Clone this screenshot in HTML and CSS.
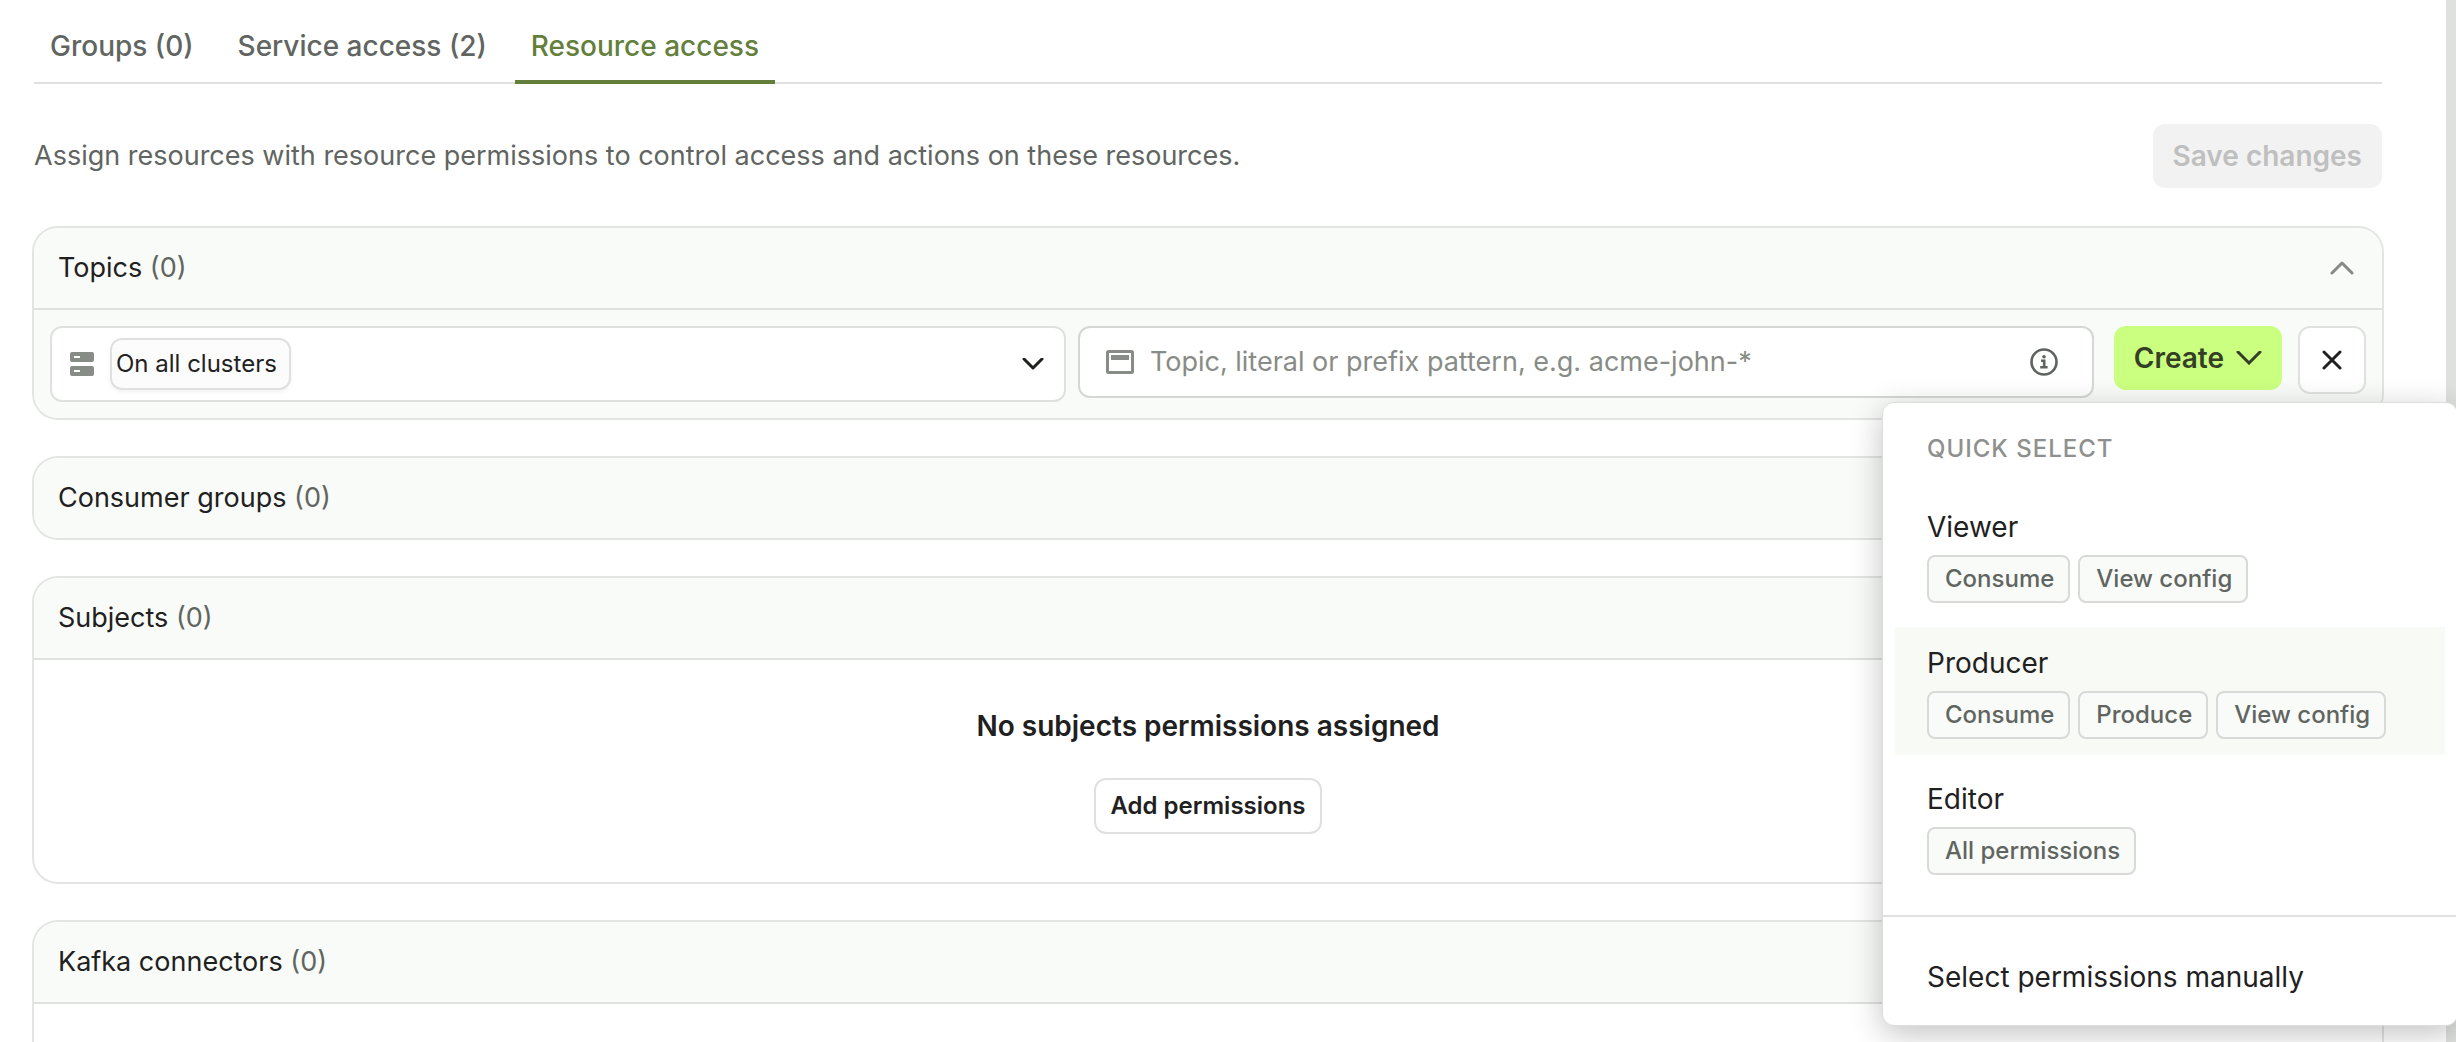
FILE: index.html
```html
<!DOCTYPE html>
<html lang="en">
<head>
<meta charset="utf-8">
<title>Resource access</title>
<link rel="stylesheet" href="styles.css">
</head>
<body>
<div class="page">
  <main class="content">
    <nav class="tabs">
      <a class="tab" href="#groups">Groups (0)</a>
      <a class="tab" href="#service-access">Service access (2)</a>
      <a class="tab tab-active" href="#resource-access" aria-current="page">Resource access</a>
    </nav>

    <div class="intro">
      <p class="intro-text">Assign resources with resource permissions to control access and actions on these resources.</p>
      <button class="save-button" type="button" disabled>Save changes</button>
    </div>

    <section class="card">
      <h2 class="card-title">
        <button class="card-header" type="button" aria-expanded="true">
          <span class="card-label">Topics <span class="count">(0)</span></span>
          <svg class="caret" width="24" height="14" viewBox="0 0 24 14" aria-hidden="true"><path d="M2 12 12 2l10 10"/></svg>
        </button>
      </h2>
      <div class="topic-form">
        <div class="field cluster-field">
          <svg width="24" height="24" viewBox="0 0 24 24" aria-hidden="true">
            <rect class="icon-fill" width="24" height="10" rx="2"/><rect class="icon-fill" y="14" width="24" height="10" rx="2"/>
            <rect class="icon-gap" x="4" y="4" width="6" height="2"/><rect class="icon-gap" x="4" y="18" width="6" height="2"/>
          </svg>
          <select class="cluster-select" aria-label="Clusters"><option>On all clusters</option></select>
          <svg class="field-chevron" width="22" height="12" viewBox="0 0 22 12" aria-hidden="true"><path d="M2 1 11 10l9-9"/></svg>
        </div>
        <div class="field pattern-field">
          <svg width="28" height="24" viewBox="0 0 28 24" aria-hidden="true">
            <rect class="icon-line" x="1.5" y="1.5" width="25" height="21" rx="1"/><rect class="icon-fill" x="5" y="5" width="18" height="5"/>
          </svg>
          <input class="pattern-input" type="text" aria-label="Topic pattern" placeholder="Topic, literal or prefix pattern, e.g. acme-john-*">
          <svg class="info" width="28" height="28" viewBox="0 0 28 28" aria-hidden="true">
            <circle class="info-line" cx="14" cy="14" r="12.5"/><circle class="info-dot" cx="14" cy="8.7" r="1.8"/><path class="info-line" d="M11 12.8h3.2v6.5M10.2 19.3h7.4"/>
          </svg>
        </div>
        <div class="create">
          <button class="create-button" type="button" aria-haspopup="menu" aria-expanded="true">
            Create
            <svg width="26" height="14" viewBox="0 0 26 14" aria-hidden="true"><path d="M2 1 13 12 24 1"/></svg>
          </button>
          <div class="menu" role="menu">
            <div class="menu-group">
              <p class="menu-heading">QUICK SELECT</p>
              <button class="menu-item" type="button" role="menuitem">
                <span class="menu-name">Viewer</span>
                <span class="tags"><span class="tag">Consume</span><span class="tag">View config</span></span>
              </button>
              <button class="menu-item menu-item-hover" type="button" role="menuitem">
                <span class="menu-name">Producer</span>
                <span class="tags"><span class="tag">Consume</span><span class="tag">Produce</span><span class="tag">View config</span></span>
              </button>
              <button class="menu-item" type="button" role="menuitem">
                <span class="menu-name">Editor</span>
                <span class="tags"><span class="tag">All permissions</span></span>
              </button>
            </div>
            <div class="menu-group menu-footer">
              <button class="menu-item" type="button" role="menuitem"><span class="menu-name">Select permissions manually</span></button>
            </div>
          </div>
        </div>
        <button class="close-button" type="button" aria-label="Remove row">
          <svg width="20" height="20" viewBox="0 0 20 20" aria-hidden="true"><path d="M2 2l16 16M18 2 2 18"/></svg>
        </button>
      </div>
    </section>

    <section class="card">
      <h2 class="card-title"><button class="card-header" type="button" aria-expanded="false"><span class="card-label">Consumer groups <span class="count">(0)</span></span></button></h2>
    </section>

    <section class="card">
      <h2 class="card-title"><button class="card-header" type="button" aria-expanded="true"><span class="card-label">Subjects <span class="count">(0)</span></span></button></h2>
      <div class="empty">
        <h3 class="empty-title">No subjects permissions assigned</h3>
        <button class="add-button" type="button">Add permissions</button>
      </div>
    </section>

    <section class="card">
      <h2 class="card-title"><button class="card-header" type="button" aria-expanded="true"><span class="card-label">Kafka connectors <span class="count">(0)</span></span></button></h2>
      <div class="empty"></div>
    </section>
  </main>
  <div class="page-edge"></div>
</div>
</body>
</html>
```
FILE: styles.css
```css
* { box-sizing: border-box; }

body {
  margin: 0;
  background: #fff;
  color: #1f211f;
  font-family: Inter, "Liberation Sans", sans-serif;
  font-size: 28px;
  line-height: 40px;
}

h2, h3, p { margin: 0; font-size: inherit; font-weight: inherit; }

button, input, select {
  margin: 0;
  padding: 0;
  border: 0;
  background: none;
  color: inherit;
  font: inherit;
}

svg { display: block; flex: none; fill: none; }

.page {
  display: flex;
  height: 100vh;
  overflow: hidden;
}

.content {
  flex: 1;
  min-width: 0;
  padding: 0 64px 0 34px;
}

.page-edge {
  width: 10px;
  background: #dfe1de;
}

.tabs {
  display: flex;
  gap: 12px;
  height: 84px;
  border-bottom: 2px solid #e0e0e0;
}

.tab {
  height: 84px;
  padding: 26px 16px 0;
  color: #616561;
  font-weight: 500;
  text-decoration: none;
}

.tab-active {
  border-bottom: 4px solid #647f3c;
  color: #647f3c;
}

.intro {
  display: flex;
  align-items: center;
  justify-content: space-between;
  padding: 40px 0;
}

.intro-text { color: #616561; font-size: 27px; }

.save-button {
  height: 64px;
  padding: 0 20px;
  border-radius: 12px;
  background: #f2f2f2;
  color: #bfbfbf;
  font-weight: 600;
}

.card {
  margin-bottom: 40px;
  border-radius: 24px;
  box-shadow: 0 0 0 2px #e3e5e3;
}

.card-header {
  display: flex;
  align-items: center;
  justify-content: space-between;
  width: 100%;
  height: 80px;
  padding: 0 28px 0 24px;
  border-radius: 24px;
  background: #f9fbf8;
  font-size: 27px;
}

.card-header[aria-expanded="true"] { border-radius: 24px 24px 0 0; }

.count { color: #616561; }

.caret {
  stroke: #868986;
  stroke-width: 3;
  stroke-linecap: round;
  stroke-linejoin: round;
}

.topic-form {
  display: flex;
  align-items: flex-start;
  padding: 16px;
  border-top: 2px solid #dfe1df;
  border-radius: 0 0 24px 24px;
  background: #f9fbf8;
}

.field {
  display: flex;
  flex: 1 1 200px;
  align-items: center;
  min-width: 0;
  border: 2px solid #dfe1df;
  border-radius: 12px;
  background: #fff;
}

.icon-fill { fill: #888c86; }
.icon-gap { fill: #fff; }
.icon-line { stroke: #888c86; stroke-width: 3; }

.cluster-field {
  gap: 16px;
  height: 76px;
  margin-right: 12px;
  padding: 0 20px 0 18px;
}

.cluster-select {
  appearance: none;
  height: 52px;
  padding: 0 12px 0 4px;
  border: 2px solid #e0e0e0;
  border-radius: 12px;
  background: #fcfcfc;
  box-shadow: 0 2px 4px rgba(0, 0, 0, 0.05);
  font-size: 24px;
}

.field-chevron {
  margin-left: auto;
  stroke: #1f211f;
  stroke-width: 3;
  stroke-linecap: round;
  stroke-linejoin: round;
}

.pattern-field {
  gap: 16px;
  height: 72px;
  margin-right: 20px;
  padding: 0 34px 0 26px;
  border-color: #d5d7d5;
}

.pattern-input {
  flex: 1;
  min-width: 0;
  outline: 0;
  font-size: 27px;
}

.pattern-input::placeholder { color: #888c86; opacity: 1; }

.info-line { stroke: #5f635f; stroke-width: 2.6; }
.info-dot { fill: #5f635f; }

.create {
  position: relative;
  margin-right: 16px;
}

.create-button {
  display: flex;
  align-items: center;
  gap: 12px;
  height: 64px;
  padding: 0 20px;
  border-radius: 12px;
  background: #cbff7f;
  color: #353f26;
  font-weight: 600;
}

.create-button svg {
  stroke: #353f26;
  stroke-width: 3;
  stroke-linecap: round;
}

.close-button {
  display: flex;
  align-items: center;
  justify-content: center;
  width: 68px;
  height: 68px;
  border: 2px solid #e0e2e0;
  border-radius: 12px;
  background: #fff;
}

.close-button svg {
  stroke: #1f211f;
  stroke-width: 3;
  stroke-linecap: round;
}

.menu {
  position: absolute;
  z-index: 1;
  top: 76px;
  right: -176px;
  width: 576px;
  border: 1px solid #dcdedc;
  border-radius: 12px;
  background: #fff;
  box-shadow: 0 8px 32px rgba(0, 0, 0, 0.24);
}

.menu-group {
  display: flex;
  flex-direction: column;
  gap: 8px;
  padding: 26px 12px 24px;
}

.menu-heading {
  margin-bottom: 14px;
  padding: 0 32px;
  color: #8e908e;
  font-size: 24px;
  font-weight: 500;
  letter-spacing: 1px;
}

.menu-item {
  display: flex;
  flex-direction: column;
  align-items: flex-start;
  gap: 8px;
  padding: 16px 32px;
  text-align: left;
}

.menu-item-hover { background: #f8faf5; }

.tags { display: flex; gap: 8px; }

.tag {
  display: flex;
  align-items: center;
  height: 48px;
  padding: 0 14px 0 16px;
  border: 2px solid #d8dad8;
  border-radius: 8px;
  background: #f9fbf8;
  color: #616561;
  font-size: 24px;
  font-weight: 500;
}

.menu-footer {
  padding-top: 24px;
  padding-bottom: 12px;
  border-top: 2px solid #e0e0e0;
}

.empty {
  display: flex;
  flex-direction: column;
  align-items: center;
  gap: 32px;
  min-height: 224px;
  padding: 46px 24px 48px;
  border-top: 2px solid #dfe1df;
}

.empty-title { font-weight: 600; }

.add-button {
  height: 56px;
  padding: 0 14px;
  border: 2px solid #e0e0e0;
  border-radius: 12px;
  background: #fff;
  font-size: 24px;
  font-weight: 600;
}
```
